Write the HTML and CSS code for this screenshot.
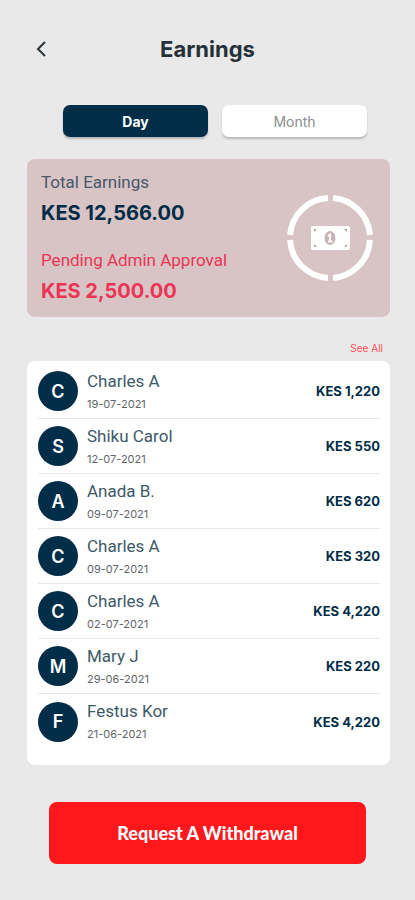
FILE: index.html
```html
<!DOCTYPE html>
<html lang="en">
<head>
<meta charset="utf-8">
<meta name="viewport" content="width=device-width, initial-scale=1">
<title>Earnings</title>
<link rel="stylesheet" href="styles.css">
</head>
<body>
<header class="header">
  <button class="back" type="button" aria-label="Back">
    <svg width="12" height="18" viewBox="0 0 12 18" fill="none" stroke="currentColor" stroke-width="2"><path d="M10 2 3 9l7 7"/></svg>
  </button>
  <h1 class="title">Earnings</h1>
</header>
<main class="content">
  <div class="tabs">
    <button class="tab tab-active" type="button">Day</button>
    <button class="tab" type="button">Month</button>
  </div>
  <section class="summary">
    <dl class="totals">
      <dt class="label">Total Earnings</dt>
      <dd class="total">KES 12,566.00</dd>
      <dt class="label pending">Pending Admin Approval</dt>
      <dd class="total pending">KES 2,500.00</dd>
    </dl>
    <svg class="money" width="88" height="88" viewBox="0 0 88 88" aria-hidden="true">
      <g fill="none" stroke="#fff" stroke-width="6">
        <path d="M47 4.1A40 40 0 0 1 83.900 41M83.900 46A40 40 0 0 1 47 83.900M42 83.900A40 40 0 0 1 4.100 46M4.100 41A40 40 0 0 1 42 4.100"/>
      </g>
      <rect x="25" y="32" width="39" height="24" rx="2" fill="#fff"/>
      <ellipse cx="44" cy="44" rx="5.500" ry="7" fill="#c7b4b4"/>
      <path d="M42 42l2-1.500V47M42 47.500h4.500" fill="none" stroke="#fff" stroke-width="1.800"/>
      <path d="M28 38v-3h3zM61 38v-3h-3zM28 50v3h3zM61 50v3h-3z" fill="#b7a3a3"/>
    </svg>
  </section>
  <a class="see-all" href="#">See All</a>
  <ul class="list">
    <li class="row"><span class="avatar">C</span><div class="who"><span class="name">Charles A</span><time class="date">19-07-2021</time></div><span class="amount">KES 1,220</span></li>
    <li class="row"><span class="avatar">S</span><div class="who"><span class="name">Shiku Carol</span><time class="date">12-07-2021</time></div><span class="amount">KES 550</span></li>
    <li class="row"><span class="avatar">A</span><div class="who"><span class="name">Anada B.</span><time class="date">09-07-2021</time></div><span class="amount">KES 620</span></li>
    <li class="row"><span class="avatar">C</span><div class="who"><span class="name">Charles A</span><time class="date">09-07-2021</time></div><span class="amount">KES 320</span></li>
    <li class="row"><span class="avatar">C</span><div class="who"><span class="name">Charles A</span><time class="date">02-07-2021</time></div><span class="amount">KES 4,220</span></li>
    <li class="row"><span class="avatar">M</span><div class="who"><span class="name">Mary J</span><time class="date">29-06-2021</time></div><span class="amount">KES 220</span></li>
    <li class="row"><span class="avatar">F</span><div class="who"><span class="name">Festus Kor</span><time class="date">21-06-2021</time></div><span class="amount">KES 4,220</span></li>
  </ul>
  <button class="request" type="button">Request A Withdrawal</button>
</main>
</body>
</html>
```
FILE: styles.css
```css
* { box-sizing: border-box; }
body {
  margin: 0;
  background: #e9e9e9;
  color: #002c47;
  font-family: Inter, "Liberation Sans", sans-serif;
}
button { border: 0; font-family: inherit; cursor: pointer; }
.header {
  display: grid;
  grid-template-columns: 32px 1fr 32px;
  align-items: center;
  padding: 33px 25px 0;
}
.back {
  display: flex;
  justify-content: center;
  padding: 7px 0;
  background: none;
  color: #2a343b;
}
.title {
  margin: 0;
  text-align: center;
  font-size: 22px;
  line-height: 32px;
  font-weight: 700;
  color: #263038;
}
.content {
  display: flex;
  flex-direction: column;
  padding: 40px 25px 36px 27px;
}
.tabs {
  display: grid;
  grid-template-columns: 1fr 1fr;
  gap: 14px;
  margin: 0 23px 22px 36px;
}
.tab {
  height: 32px;
  padding: 0;
  border-radius: 7px;
  background: #fff;
  box-shadow: 0 2px 2px #b9b9b9;
  color: #8b8f92;
  font-size: 14px;
}
.tab-active { background: #002e49; color: #fff; font-weight: 700; }
.summary {
  display: flex;
  justify-content: space-between;
  align-items: center;
  padding: 9px 16px 9px 14px;
  border-radius: 8px;
  background: #d8c4c4;
}
.totals { margin: 0; }
.label { font-family: Roboto, sans-serif; font-size: 17px; line-height: 28px; color: #485869; }
.total { margin: 0 0 16px; font-size: 20px; line-height: 34px; font-weight: 700; }
.total:last-child { margin: 0; }
.totals .pending { color: #eb3557; }
.see-all {
  align-self: flex-end;
  margin: 23px 7px 5px 0;
  color: #ff5058;
  font-size: 10px;
  line-height: 16px;
  text-decoration: none;
}
.list {
  margin: 0;
  padding: 3px 10px 16px 11px;
  border-radius: 8px;
  background: #fff;
  list-style: none;
}
.row {
  display: flex;
  align-items: center;
  gap: 9px;
  height: 55px;
  border-bottom: 1px solid #e6e7e8;
}
.row:last-child { border: 0; }
.avatar {
  display: grid;
  place-items: center;
  width: 40px;
  height: 40px;
  border-radius: 50%;
  background: #002e49;
  color: #fff;
  font-size: 18px;
  font-weight: 600;
}
.who { display: flex; flex: 1; flex-direction: column; gap: 3px; }
.name { font-family: Roboto, sans-serif; font-size: 17px; line-height: 22px; color: #3d5968; }
.date { font-size: 11px; line-height: 18px; color: #62666a; }
.amount { font-size: 13px; font-weight: 700; }
.request {
  height: 62px;
  margin: 37px 24px 0 22px;
  border-radius: 8px;
  background: #ff171b;
  color: #fff;
  font-family: Lato, sans-serif;
  font-size: 18px;
  font-weight: 900;
}
```
